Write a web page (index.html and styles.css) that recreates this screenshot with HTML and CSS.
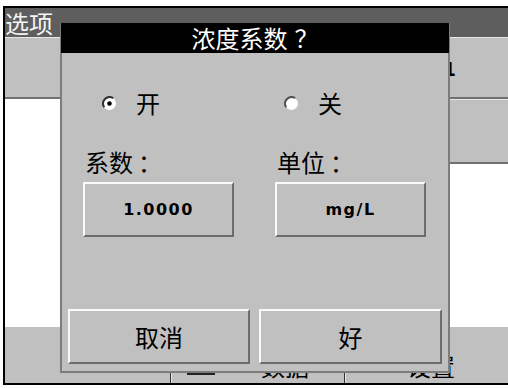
FILE: index.html
```html
<!DOCTYPE html>
<html lang="zh-CN">
<head>
<meta charset="UTF-8">
<title>浓度系数</title>
<link rel="stylesheet" href="styles.css">
</head>
<body>
  <div class="screen">
    <div class="titlebar"><span>选项</span></div>
    <div class="main">
      <div class="col-left">
        <div class="row-btn"></div>
        <div class="list"></div>
      </div>
      <div class="col-right">
        <div class="row-btn row-btn-text">程序 1</div>
        <div class="row-btn row-btn-2"></div>
        <div class="list"></div>
      </div>
    </div>
    <div class="bottom">
      <div class="bottom-btn btn-a"></div>
      <div class="bottom-btn btn-b"><span class="doc-icon"></span><span class="bottom-label">数据</span></div>
      <div class="bottom-btn btn-c"><span class="bottom-label">设置</span></div>
    </div>

    <!-- 对话框 -->
    <div class="dialog">
      <div class="dialog-title">浓度系数<span class="punct title-q">？</span></div>
      <div class="dialog-body">
        <div class="radio-row">
          <div class="radio">
            <svg width="15" height="15" viewBox="0 0 15 15">
              <circle cx="7.5" cy="7.5" r="6.5" fill="#fff"/>
              <path d="M2.2 11.2 A6.5 6.5 0 0 1 11.2 2.2" fill="none" stroke="#303030" stroke-width="2"/>
              <circle cx="7.5" cy="7.5" r="2.3" fill="#000"/>
            </svg>
            <span>开</span>
          </div>
          <div class="radio">
            <svg width="15" height="15" viewBox="0 0 15 15">
              <circle cx="7.5" cy="7.5" r="6.5" fill="#fff"/>
              <path d="M2.2 11.2 A6.5 6.5 0 0 1 11.2 2.2" fill="none" stroke="#505050" stroke-width="2"/>
            </svg>
            <span>关</span>
          </div>
        </div>
        <div class="field-grid">
          <div class="field-label">系数<span class="punct colon">：</span></div>
          <div class="field-label">单位<span class="punct colon">：</span></div>
          <div class="bevel value-btn">1.0000</div>
          <div class="bevel value-btn">mg/L</div>
        </div>
        <div class="action-row">
          <div class="bevel action-btn">取消</div>
          <div class="bevel action-btn">好</div>
        </div>
      </div>
    </div>
  </div>
</body>
</html>
```

FILE: styles.css
```css
body {
  margin: 0;
  background-color: #fff;
  font-family: "Noto Sans CJK SC", "DejaVu Sans", sans-serif;
  color: #000;
}
.punct {
  font-family: "Noto Sans CJK TC", sans-serif;
}
.title-q {
  margin-left: 7px;
}
.colon {
  margin-left: 5px;
}
.screen {
  position: relative;
  margin: 6px 0 0 3px;
  height: 379px;
  box-sizing: border-box;
  border: 2px solid #000;
  border-right: none;
  display: flex;
  flex-direction: column;
  background-color: #c0c0c0;
  overflow: hidden;
}
.titlebar {
  height: 29px;
  background-color: #5e5e5e;
  color: #f4f4f4;
  font-size: 24px;
  line-height: 29px;
}
.main {
  height: 290px;
  display: flex;
}
.col-left {
  width: 245px;
  display: flex;
  flex-direction: column;
}
.col-right {
  flex: 1;
  display: flex;
  flex-direction: column;
}
.row-btn {
  height: 62px;
  box-sizing: border-box;
  background-color: #c0c0c0;
  border-top: 1px solid #e6e6e6;
  border-bottom: 2px solid #707070;
}
.row-btn-2 {
  height: 65px;
}
.row-btn-text {
  text-align: right;
  padding-right: 52px;
  font-family: "DejaVu Sans", sans-serif;
  font-weight: bold;
  font-size: 19px;
  line-height: 62px;
}
.list {
  flex: 1;
  background-color: #fff;
}
.bottom {
  flex: 1;
  display: flex;
}
.bottom-btn {
  box-sizing: border-box;
  display: flex;
  align-items: flex-end;
  padding-bottom: 4px;
  border-right: 1px solid #303030;
  border-left: 1px solid #e6e6e6;
}
.btn-a {
  width: 166px;
  border-left: none;
}
.btn-b {
  width: 174px;
  padding-left: 15px;
}
.btn-c {
  flex: 1;
  border-right: none;
  padding-left: 61px;
}
.doc-icon {
  width: 28px;
  height: 4px;
  border-top: 3px solid #222;
  margin-right: 46px;
}
.bottom-label {
  font-size: 24px;
  line-height: 26px;
}

/* 对话框 */
.dialog {
  position: absolute;
  left: 55px;
  top: 15px;
  width: 390px;
  height: 350px;
  box-sizing: border-box;
  border: 2px solid #7c7c7c;
  border-top: none;
  background-color: #c0c0c0;
  display: flex;
  flex-direction: column;
}
.dialog-title {
  height: 30px;
  margin: 0 -1px;
  background-color: #000;
  color: #fff;
  font-size: 24px;
  line-height: 30px;
  text-align: center;
}
.dialog-body {
  flex: 1;
  display: flex;
  flex-direction: column;
  padding: 0 6px 7px 6px;
}
.radio-row {
  display: grid;
  grid-template-columns: 182px 182px;
  margin-top: 38px;
  padding-left: 34px;
}
.radio {
  display: flex;
  align-items: center;
  font-size: 24px;
  line-height: 24px;
}
.radio svg {
  margin-right: 19px;
}
.field-grid {
  display: grid;
  grid-template-columns: 151px 151px;
  column-gap: 41px;
  margin-top: 35px;
  padding-left: 15px;
}
.field-label {
  font-size: 24px;
  line-height: 24px;
  margin-bottom: 8px;
  padding-left: 2px;
}
.bevel {
  box-sizing: border-box;
  background-color: #c0c0c0;
  border: 2px solid;
  border-color: #fafafa #6c6c6c #6c6c6c #fafafa;
  display: flex;
  align-items: center;
  justify-content: center;
}
.value-btn {
  height: 55px;
  font-family: "DejaVu Sans", sans-serif;
  font-weight: bold;
  font-size: 16px;
  letter-spacing: 1.5px;
}
.action-row {
  margin-top: auto;
  display: grid;
  grid-template-columns: 182px 183px;
  column-gap: 9px;
}
.action-btn {
  height: 55px;
  font-size: 24px;
}
```
